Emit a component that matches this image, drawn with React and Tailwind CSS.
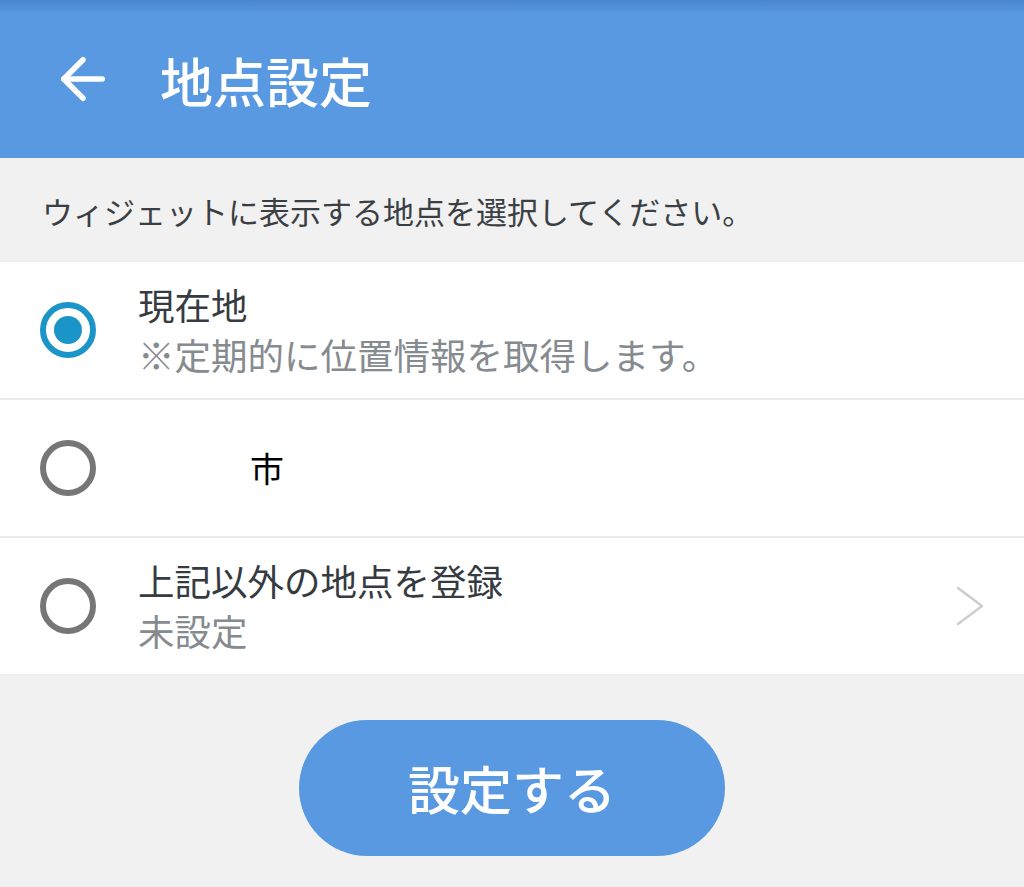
import { ArrowLeft } from "lucide-react";

const font = { fontFamily: '"Noto Sans CJK JP", "Noto Sans", sans-serif' };

function Radio({ checked }) {
  return (
    <svg width="60" height="60" viewBox="0 0 60 60" className="shrink-0">
      <circle
        cx="30"
        cy="30"
        r="25"
        fill="none"
        stroke={checked ? "#1b95c7" : "#767676"}
        strokeWidth="6"
      />
      {checked && <circle cx="30" cy="30" r="14" fill="#1b95c7" />}
    </svg>
  );
}

function Chevron() {
  return (
    <svg width="32" height="42" viewBox="0 0 32 42" className="shrink-0">
      <path d="M4 3 L28 21 L4 39" fill="none" stroke="#cdcdcd" strokeWidth="2.4" strokeLinecap="round" strokeLinejoin="round" />
    </svg>
  );
}

function Option({ checked, title, sub, chevron, titleClass }) {
  return (
    <div className="flex items-center h-[136px] bg-white pl-[38px] pr-[38px]">
      <Radio checked={checked} />
      <div className="flex-1 ml-[40px] flex flex-col justify-center">
        <p className={titleClass || "text-[36.5px] leading-[50px] text-[#353b41]"}>{title}</p>
        {sub && <p className="text-[36.5px] leading-[50px] text-[#868b90]">{sub}</p>}
      </div>
      {chevron && <Chevron />}
    </div>
  );
}

export default function App() {
  return (
    <div className="w-[1024px] h-[887px] bg-[#f1f1f1] flex flex-col overflow-hidden" style={font}>
      <header className="h-[158px] shrink-0 bg-[linear-gradient(to_bottom,#4a86cf_0px,#5899e2_14px)] flex items-center pl-[50px]">
        <ArrowLeft size={66} strokeWidth={2} className="text-white" />
        <h1 className="ml-[44px] text-[53px] font-medium text-white leading-none mt-[2px]">
          地点設定
        </h1>
      </header>

      <div className="h-[104px] shrink-0 flex items-center pl-[42px]">
        <p className="text-[31px] text-[#3a3f44] leading-none">
          ウィジェットに表示する地点を選択してください。
        </p>
      </div>

      <div className="flex flex-col gap-[2px] bg-[#ebebeb]">
        <Option checked title="現在地" sub="※定期的に位置情報を取得します。" />
        <Option
          title="市"
          titleClass="text-[34px] leading-[50px] text-black pl-[112px]"
        />
        <Option title="上記以外の地点を登録" sub="未設定" chevron />
      </div>

      <div className="flex justify-center pt-[46px]">
        <button className="w-[426px] h-[136px] rounded-full bg-[#5899e2] text-white text-[52px] font-medium flex items-center justify-center">
          設定する
        </button>
      </div>
    </div>
  );
}
